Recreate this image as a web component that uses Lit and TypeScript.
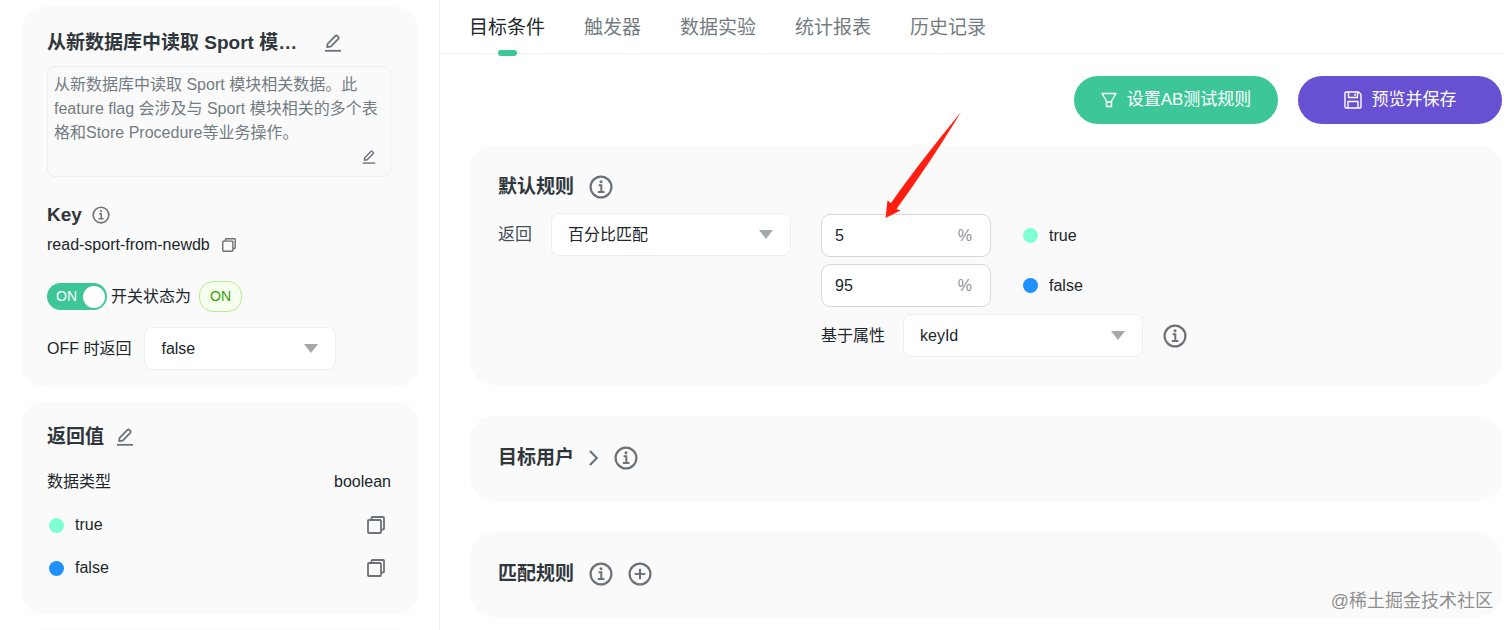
import { LitElement, html, css, svg } from "lit";
import { customElement, state } from "lit/decorators.js";

const editIcon = (cls: string) => html`
  <svg class=${cls} viewBox="0 0 18 18" fill="none" stroke="currentColor" stroke-width="1.8" stroke-linejoin="round" aria-hidden="true">
    <path d="M1 16.800h16" />
    <path d="M3.600 9.900 11.400 1.900a1.300 1.300 0 0 1 1.900 0l1 1a1.300 1.300 0 0 1 0 1.900L6.700 12.600l-3.600.500z" />
  </svg>`;

const copyIcon = (cls: string) => html`
  <svg class=${cls} viewBox="0 0 18 18" fill="none" stroke="currentColor" stroke-width="1.8" stroke-linejoin="round" aria-hidden="true">
    <rect x="1" y="4" width="13" height="13" rx="1" />
    <path d="M4.500 3.800V2a1 1 0 0 1 1-1H16a1 1 0 0 1 1 1v10.500a1 1 0 0 1-1 1h-1.800" />
  </svg>`;

const infoMark = svg`
  <circle cx="12" cy="12" r="10.400" stroke-width="2.200" />
  <path d="M9.600 10.200h2.700v6.500M8.800 16.900h6.600" stroke-width="2" />
  <circle cx="12" cy="6.800" r="1.500" fill="currentColor" stroke="none" />`;

const infoIcon = (cls: string) => html`
  <svg class=${cls} viewBox="0 0 24 24" fill="none" stroke="currentColor" aria-hidden="true">${infoMark}</svg>`;

const caret = html`
  <svg class="caret" viewBox="0 0 14 9" aria-hidden="true"><path d="M0 0h14L7 9z" fill="#a6a9ac" /></svg>`;

@customElement("app-root")
export class AppRoot extends LitElement {
  @state() private enabled = true;
  @state() private activeTab = 0;

  private tabs = ["目标条件", "触发器", "数据实验", "统计报表", "历史记录"];

  private variations = [
    { name: "true", tone: "mint", percent: "5" },
    { name: "false", tone: "blue", percent: "95" },
  ];

  static styles = css`
    :host {
      display: block;
      font-family: "Liberation Sans", "Noto Sans CJK SC", sans-serif;
      font-size: 16px;
      line-height: 24px;
      color: #20262a;
      background: #fff;
    }
    * { box-sizing: border-box; }
    h1, h2, p, ul { margin: 0; padding: 0; }
    ul { list-style: none; }
    svg { display: block; flex: none; }
    button, input, select { font: inherit; color: inherit; margin: 0; }

    .page {
      position: relative;
      display: grid;
      grid-template-columns: 440px minmax(0, 1fr);
      height: 100vh;
      overflow: hidden;
    }

    .side {
      display: flex;
      flex-direction: column;
      gap: 14px;
      padding: 7px 20px 0 21px;
      border-right: 1px solid #f0f1f2;
      overflow: hidden;
    }
    .card { background: #fafafa; border-radius: 24px; flex: none; }
    .side .card { padding: 22px 28px 17px 26px; }
    .side .values { padding-bottom: 35px; }
    .side .more { min-height: 120px; }

    .heading {
      font-size: 19px;
      line-height: 28px;
      font-weight: 700;
      color: #30373c;
      white-space: nowrap;
    }
    .row { display: flex; align-items: center; }

    .icon-button {
      display: flex;
      padding: 0;
      border: 0;
      background: none;
      color: #6c7277;
      cursor: pointer;
    }
    .i14 { width: 14px; height: 14px; }
    .i16 { width: 16px; height: 16px; }
    .i18 { width: 18px; height: 18px; }
    .i24 { width: 24px; height: 24px; }

    .title { gap: 27px; }
    .about {
      margin-top: 9px;
      padding: 6px 6px 7px;
      border: 1px solid #edeff0;
      border-radius: 8px;
      color: #737c82;
    }
    .about-foot { display: flex; justify-content: flex-end; align-items: center; height: 24px; padding-right: 8px; }
    .key-head { gap: 10px; margin-top: 24px; }
    .key-row { gap: 12px; margin-top: 4px; }
    .status { height: 31px; gap: 4px; margin-top: 24px; }

    .switch { display: grid; width: 60px; height: 27px; cursor: pointer; }
    .switch > * { grid-area: 1 / 1; }
    .switch input {
      appearance: none;
      width: 60px;
      height: 27px;
      border-radius: 14px;
      background: #b9bec2;
      cursor: pointer;
    }
    .switch input:checked { background: #3dc799; }
    .switch-text { padding-left: 9px; font-size: 14px; line-height: 27px; color: #fff; pointer-events: none; }
    .knob {
      width: 22px;
      height: 22px;
      border-radius: 50%;
      background: #fff;
      align-self: center;
      justify-self: end;
      margin-right: 2px;
      pointer-events: none;
    }
    .badge {
      margin-left: 4px;
      padding: 0 10px;
      border: 1px solid #b7eb8f;
      border-radius: 14px;
      background: #f6ffed;
      color: #389e0d;
      font-size: 14px;
      line-height: 29px;
    }

    .off-row { gap: 13px; margin-top: 15px; }
    .select { display: grid; align-items: center; height: 43px; width: 240px; }
    .select > * { grid-area: 1 / 1; }
    .select.small { width: 192px; }
    .select select {
      appearance: none;
      width: 100%;
      height: 100%;
      padding: 0 40px 0 16px;
      border: 1px solid #eceeef;
      border-radius: 8px;
      background: #fff;
    }
    .caret { width: 14px; height: 9px; justify-self: end; margin-right: 18px; pointer-events: none; }

    .values-head { gap: 12px; }
    .value-list { display: grid; gap: 19px; margin-top: 19px; }
    .between { justify-content: space-between; }
    .between .icon-button { margin-right: 6px; }
    .variation { display: flex; align-items: center; gap: 11px; padding-left: 2px; }
    .dot { width: 15px; height: 15px; border-radius: 50%; }
    .mint { background: #7fffd4; }
    .blue { background: #1e90ff; }

    .main { min-width: 0; padding-right: 10px; }
    .tabs {
      display: flex;
      gap: 39px;
      height: 54px;
      padding-left: 29px;
      border-bottom: 1px solid #eeeff0;
    }
    .tab {
      position: relative;
      padding: 3px 0 0;
      border: 0;
      background: none;
      font-size: 19px;
      line-height: 28px;
      color: #737b81;
      cursor: pointer;
    }
    .tab.active { color: #20262a; }
    .tab.active::after {
      content: "";
      position: absolute;
      left: calc(50% - 9px);
      bottom: -3px;
      width: 19px;
      height: 6px;
      border-radius: 3px;
      background: #3dc799;
    }

    .actions { display: flex; justify-content: flex-end; gap: 20px; margin: 22px 0 21px; }
    .action {
      display: flex;
      align-items: center;
      justify-content: center;
      gap: 10px;
      width: 204px;
      height: 48px;
      padding: 0;
      border: 0;
      border-radius: 24px;
      font-size: 17px;
      color: #fff;
      cursor: pointer;
    }
    .green { background: #3dc799; }
    .purple { background: #6750d2; }

    .rules { display: grid; gap: 31px; padding-left: 30px; }
    .rules .card { min-height: 85px; padding: 28px; }
    .rule-head { height: 28px; gap: 15px; }
    .rule-head .tight { margin-left: 1px; }

    .default-rule { display: flex; align-items: flex-start; margin-top: 12px; }
    .lead { font-size: 17px; line-height: 43px; margin-right: 19px; color: #465057; white-space: nowrap; }
    .splits { display: grid; gap: 7px; margin: 1px 0 0 30px; }
    .split { gap: 30px; }
    .percent {
      display: flex;
      align-items: center;
      width: 170px;
      height: 43px;
      padding: 0 18px 0 13px;
      border: 1px solid #d6d8da;
      border-radius: 9px;
      background: #fff;
      color: #8d9296;
    }
    .percent input {
      flex: 1;
      min-width: 0;
      padding: 0;
      border: 0;
      outline: 0;
      background: none;
      color: #20262a;
    }
    .by { gap: 18px; white-space: nowrap; }
    .by .icon-button { margin-left: 2px; }

    .pointer {
      position: absolute;
      left: 885px;
      top: 111px;
      width: 77px;
      height: 107px;
      pointer-events: none;
    }
    .watermark {
      position: absolute;
      right: 19px;
      bottom: 17px;
      font-size: 18px;
      color: #8f8f8f;
      text-shadow: 1px 1px 1px #fff;
      pointer-events: none;
    }
  `;

  private renderVariation(v: { name: string; tone: string }) {
    return html`<span class="variation"><span class="dot ${v.tone}"></span>${v.name}</span>`;
  }

  private renderSide() {
    return html`
      <aside class="side">
        <section class="card">
          <div class="row title">
            <h1 class="heading">从新数据库中读取 Sport 模…</h1>
            <button class="icon-button" aria-label="编辑名称">${editIcon("i18")}</button>
          </div>
          <div class="about">
            <p>从新数据库中读取 Sport 模块相关数据。此 feature flag 会涉及与 Sport 模块相关的多个表格和Store Procedure等业务操作。</p>
            <div class="about-foot">
              <button class="icon-button" aria-label="编辑描述">${editIcon("i14")}</button>
            </div>
          </div>
          <div class="row key-head">
            <h2 class="heading">Key</h2>
            <button class="icon-button" aria-label="Key 说明">${infoIcon("i18")}</button>
          </div>
          <div class="row key-row">
            <span>read-sport-from-newdb</span>
            <button class="icon-button" aria-label="复制 Key">${copyIcon("i14")}</button>
          </div>
          <div class="row status">
            <label class="switch" for="flag">
              <input id="flag" type="checkbox" role="switch" aria-label="开关" .checked=${this.enabled}
                @change=${(e: Event) => (this.enabled = (e.target as HTMLInputElement).checked)} />
              <span class="switch-text">ON</span>
              <span class="knob"></span>
            </label>
            <span>开关状态为</span>
            <span class="badge">${this.enabled ? "ON" : "OFF"}</span>
          </div>
          <div class="row off-row">
            <label for="off">OFF 时返回</label>
            <div class="select small">
              <select id="off"><option>false</option><option>true</option></select>
              ${caret}
            </div>
          </div>
        </section>

        <section class="card values">
          <div class="row values-head">
            <h2 class="heading">返回值</h2>
            <button class="icon-button" aria-label="编辑返回值">${editIcon("i18")}</button>
          </div>
          <ul class="value-list">
            <li class="row between"><span>数据类型</span><span>boolean</span></li>
            ${this.variations.map((v) => html`
              <li class="row between">
                ${this.renderVariation(v)}
                <button class="icon-button" aria-label="复制 ${v.name}">${copyIcon("i18")}</button>
              </li>`)}
          </ul>
        </section>
        <section class="card more"></section>
      </aside>`;
  }

  private renderMain() {
    return html`
      <main class="main">
        <nav class="tabs" role="tablist">
          ${this.tabs.map((t, i) => html`
            <button class="tab ${i === this.activeTab ? "active" : ""}" role="tab"
              aria-selected=${i === this.activeTab} @click=${() => (this.activeTab = i)}>${t}</button>`)}
        </nav>

        <div class="actions">
          <button class="action green">
            <svg class="i16" viewBox="0 0 16 16" fill="none" stroke="currentColor" stroke-width="1.400" stroke-linejoin="round" aria-hidden="true">
              <path d="M1 1.500h14L10.500 9v5.500h-5V9zM5.500 10h5" />
            </svg>
            设置AB测试规则
          </button>
          <button class="action purple">
            <svg class="i18" viewBox="0 0 18 18" fill="none" stroke="currentColor" stroke-width="1.400" stroke-linejoin="round" aria-hidden="true">
              <path d="M2 1h12.500L17 3.500V16a1 1 0 0 1-1 1H2a1 1 0 0 1-1-1V2a1 1 0 0 1 1-1z" />
              <path d="M4.500 1v5.500h9V1M11 2.500V5M4 17v-6.500h10V17" />
            </svg>
            预览并保存
          </button>
        </div>

        <div class="rules">
          <section class="card">
            <div class="row rule-head">
              <h2 class="heading">默认规则</h2>
              <button class="icon-button" aria-label="默认规则说明">${infoIcon("i24")}</button>
            </div>
            <div class="default-rule">
              <label class="lead" for="serve">返回</label>
              <div class="select">
                <select id="serve"><option>百分比匹配</option><option>true</option><option>false</option></select>
                ${caret}
              </div>
              <div class="splits">
                ${this.variations.map((v) => html`
                  <div class="row split">
                    <label class="percent">
                      <input type="text" inputmode="numeric" aria-label="${v.name} 百分比" .value=${v.percent} />
                      <span>%</span>
                    </label>
                    ${this.renderVariation(v)}
                  </div>`)}
                <div class="row by">
                  <label for="attr">基于属性</label>
                  <div class="select">
                    <select id="attr"><option>keyId</option></select>
                    ${caret}
                  </div>
                  <button class="icon-button" aria-label="属性说明">${infoIcon("i24")}</button>
                </div>
              </div>
            </div>
          </section>

          <section class="card">
            <div class="row rule-head">
              <h2 class="heading">目标用户</h2>
              <button class="icon-button" aria-label="展开目标用户">
                <svg width="9" height="16" viewBox="0 0 9 16" fill="none" stroke="currentColor" stroke-width="2.200" aria-hidden="true">
                  <path d="M1 1l6.800 7L1 15" />
                </svg>
              </button>
              <button class="icon-button tight" aria-label="目标用户说明">${infoIcon("i24")}</button>
            </div>
          </section>

          <section class="card">
            <div class="row rule-head">
              <h2 class="heading">匹配规则</h2>
              <button class="icon-button" aria-label="匹配规则说明">${infoIcon("i24")}</button>
              <button class="icon-button" aria-label="添加规则">
                <svg class="i24" viewBox="0 0 24 24" fill="none" stroke="currentColor" stroke-width="2.200" aria-hidden="true">
                  <circle cx="12" cy="12" r="10.400" />
                  <path d="M12 6.800v10.400M6.800 12h10.400" />
                </svg>
              </button>
            </div>
          </section>
        </div>
      </main>`;
  }

  render() {
    return html`
      <div class="page">
        ${this.renderSide()} ${this.renderMain()}
        <svg class="pointer" viewBox="0 0 77 107" aria-hidden="true">
          <path d="M76 1C56 26 32 55 6 92L2.500 89.500.500 107l15-7.500-4-1.500C36 64 56 34 76 1z" fill="#ff1f12" />
        </svg>
        <span class="watermark">@稀土掘金技术社区</span>
      </div>`;
  }
}
